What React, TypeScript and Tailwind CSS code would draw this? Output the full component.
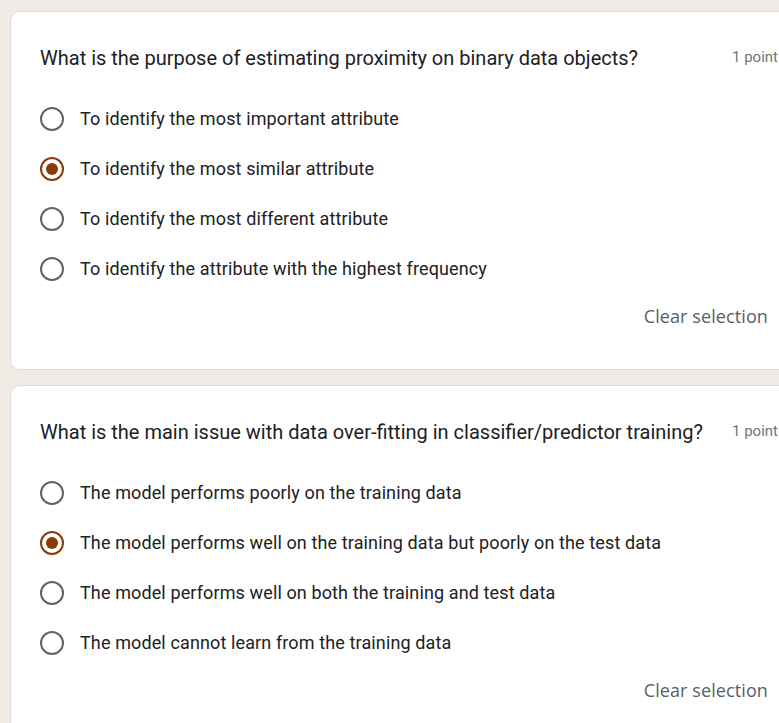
import React from "react";

type Q = { q: string; options: string[]; selected: number };

const questions: Q[] = [
  {
    q: "What is the purpose of estimating proximity on binary data objects?",
    options: [
      "To identify the most important attribute",
      "To identify the most similar attribute",
      "To identify the most different attribute",
      "To identify the attribute with the highest frequency",
    ],
    selected: 1,
  },
  {
    q: "What is the main issue with data over-fitting in classifier/predictor training?",
    options: [
      "The model performs poorly on the training data",
      "The model performs well on the training data but poorly on the test data",
      "The model performs well on both the training and test data",
      "The model cannot learn from the training data",
    ],
    selected: 1,
  },
];

function Radio({ checked }: { checked: boolean }) {
  return checked ? (
    <div className="w-[24px] h-[24px] rounded-full border-[2px] border-[#8a3a07] flex items-center justify-center shrink-0">
      <div className="w-[12px] h-[12px] rounded-full bg-[#8a3a07]" />
    </div>
  ) : (
    <div className="w-[24px] h-[24px] rounded-full border-[2px] border-[#5f6368] shrink-0" />
  );
}

function Card({ data }: { data: Q }) {
  return (
    <div className="w-[800px] bg-white border border-[#dadce0] rounded-[10px] pl-[29px] pr-[20px] pt-[28px] pb-[31px]">
      <div className="flex items-center justify-between h-[34px] w-[738px] pt-[1px]">
        <div className="text-[20px] text-[#202124]">{data.q}</div>
        <div className="text-[15px] text-[#70757a] whitespace-nowrap">1 point</div>
      </div>
      <div className="mt-[20px] flex flex-col">
        {data.options.map((o, i) => (
          <div key={i} className="h-[50px] flex items-center">
            <Radio checked={i === data.selected} />
            <div className="ml-[16px] text-[18px] tracking-[0.12px] text-[#202124] -mt-[1px]">{o}</div>
          </div>
        ))}
      </div>
      <div className="h-[44px] w-[728px] flex items-center justify-end">
        <div
          className="text-[18px] text-[#5a5e63] font-medium tracking-[0.1px] whitespace-nowrap"
          style={{ fontFamily: '"Open Sans", sans-serif' }}
        >
          Clear selection
        </div>
      </div>
    </div>
  );
}

export default function App() {
  return (
    <div
      className="w-[779px] h-[723px] overflow-hidden bg-[#f1ebe6] pl-[10px] pt-[11px] flex flex-col gap-[15px]"
      style={{ fontFamily: 'Roboto, "Liberation Sans", sans-serif' }}
    >
      {questions.map((q, i) => (
        <Card key={i} data={q} />
      ))}
    </div>
  );
}
